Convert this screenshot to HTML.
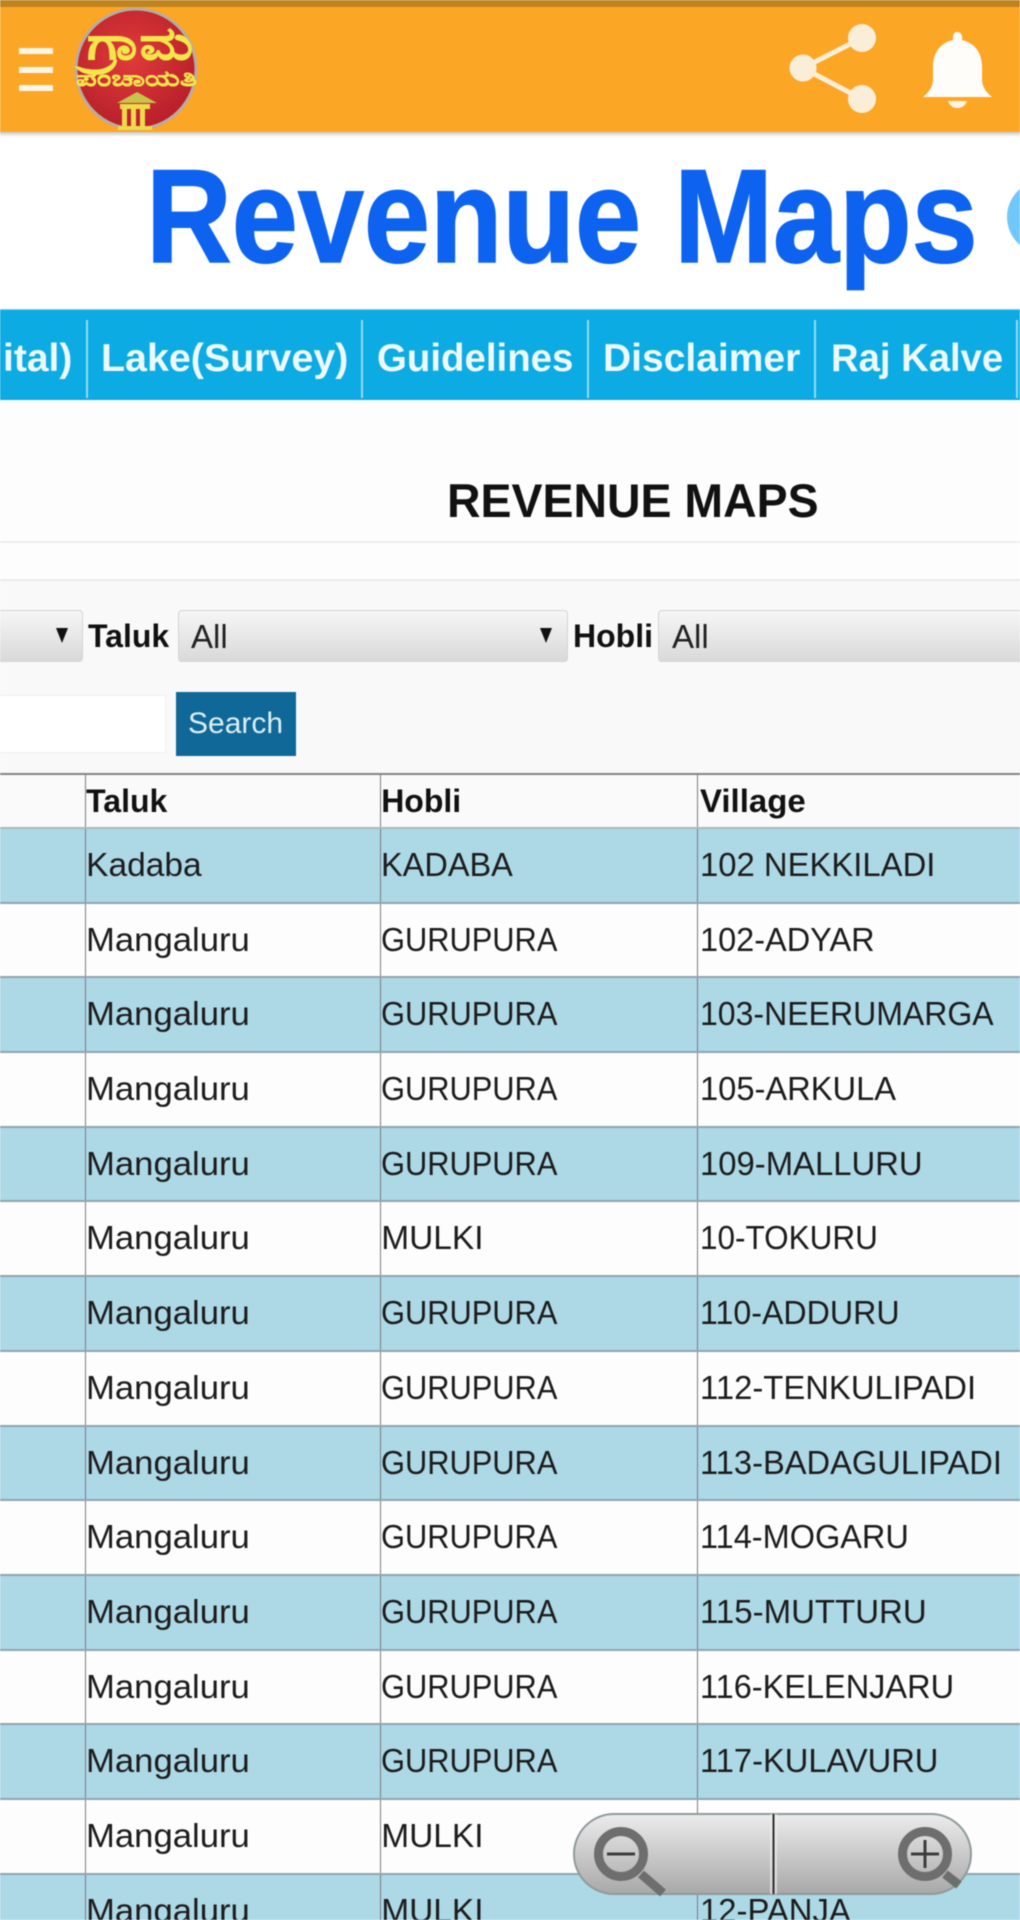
<!DOCTYPE html>
<html lang="en"><head><meta charset="utf-8"><title>Revenue Maps</title>
<style>
html,body{margin:0;padding:0;width:1020px;height:1920px;overflow:hidden;background:#fff}
#p{position:relative;width:1020px;height:1920px;overflow:hidden;background:#fff;font-family:"Liberation Sans",sans-serif;color:#111;filter:blur(.6px)}
.a{position:absolute}
.t{position:absolute;white-space:nowrap;line-height:0;transform-origin:0 50%}
.b{font-weight:bold}
#nav{position:absolute;left:0;top:309px;width:1020px;height:91px;background:#0cabe3;border-top:1px solid #6fd0ef;box-sizing:border-box}
.sep{position:absolute;top:320px;width:2px;height:78px;background:#8fdcf5}
.sel{position:absolute;top:610px;height:52px;box-sizing:border-box;border:1px solid #d4d4d4;border-radius:4px;background:linear-gradient(#f6f6f6,#d9d9d9)}
.arr{position:absolute;top:628px;width:0;height:0;border-left:6px solid transparent;border-right:6px solid transparent;border-top:15px solid #111}
#tb{position:absolute;left:0;top:773px;width:1020px;border-top:2px solid #848484}
.r{display:grid;grid-template-columns:84.5px 295.7px 316.6px 323.2px;height:74.7px;box-sizing:border-box;border-bottom:2px solid #8fa5af;background:#fdfdfd;font-size:33.5px;line-height:73px;color:#1c1c1c}
.r.o{background:#add8e6}
.r.h{height:54px;background:#fafafa;font-weight:bold;font-size:32px;line-height:53px;color:#111;border-bottom:2px solid #a9b9bf}
.r div{border-left:1.5px solid #7c7c7c;white-space:nowrap;overflow:hidden}
.r div:first-child{border-left:0}
.r div:nth-child(2){padding-left:.6px}
.r div:nth-child(4){padding-left:1.8px}
.r span{display:inline-block;transform-origin:0 50%}
.m{transform:scaleX(1.035)}
.g{transform:scaleX(.92)}
</style></head><body><div id="p">
<!-- app bar -->
<div class="a" style="left:0;top:0;width:1020px;height:7px;background:#c0841f"></div>
<div class="a" style="left:0;top:7px;width:1020px;height:125px;background:#fca626"></div>
<div class="a" style="left:0;top:132px;width:1020px;height:4px;background:linear-gradient(#c9c9c9,#f5f5f5)"></div>
<div class="a" style="left:19px;top:48px;width:34px;height:6px;background:#fdf5e6"></div>
<div class="a" style="left:19px;top:67px;width:34px;height:6px;background:#fdf5e6"></div>
<div class="a" style="left:19px;top:85px;width:34px;height:6px;background:#fdf5e6"></div>
<svg class="a" style="left:70px;top:4px" width="134" height="130" viewBox="70 4 134 130">
<defs><radialGradient id="rg" cx=".45" cy=".4" r=".65"><stop offset="0" stop-color="#e03c3a"/><stop offset="1" stop-color="#b51d2a"/></radialGradient></defs>
<circle cx="136" cy="69" r="60" fill="url(#rg)" stroke="#b8ada0" stroke-width="3"/>
<text x="87" y="59" font-size="46" fill="#f3e64a" stroke="#f3e64a" stroke-width=".6" textLength="106" lengthAdjust="spacingAndGlyphs" font-family="'Liberation Sans',sans-serif" font-weight="bold">ಗ್ರಾಮ</text>
<text x="76" y="86" font-size="22" fill="#f3e64a" stroke="#f3e64a" stroke-width=".3" textLength="121" lengthAdjust="spacingAndGlyphs" font-family="'Liberation Sans',sans-serif" font-weight="bold">ಪಂಚಾಯತಿ</text>
<path d="M117 103L137 92L157 103Z" fill="#c9c34a"/>
<path d="M120 104H150V109H120ZM122 109H127V126H122ZM131 109H136V126H131ZM140 109H145V126H140ZM118 126H152V130H118Z" fill="#f0d94a"/>
</svg>
<svg class="a" style="left:780px;top:15px" width="100" height="105" viewBox="780 15 100 105">
<path d="M862 38L803 68L862 99" fill="none" stroke="#fbeed9" stroke-width="5"/>
<circle cx="862" cy="38" r="14" fill="#fbeed9"/><circle cx="803" cy="68" r="13.5" fill="#fbeed9"/><circle cx="862" cy="99" r="14" fill="#fbeed9"/>
</svg>
<svg class="a" style="left:920px;top:28px" width="76" height="84" viewBox="920 28 76 84">
<path d="M957 32c3 0 5 2 5 5v3c13 3 20 13 20 27v12c0 8 4 13 10 18H923c6-5 10-10 10-18V67c0-14 7-24 20-27v-3c0-3 2-5 4-5z" fill="#fffdf9"/>
<path d="M948 101h19c-2 5-5 7-9.500 7s-7.500-2-9.500-7z" fill="#fdf3e2"/>
</svg>
<!-- title -->
<div class="t b" style="left:146px;top:217px;font-size:133px;color:#0d63f0;-webkit-text-stroke:1.500px #0d63f0;transform:scaleX(.893)">Revenue Maps</div>
<div class="a" style="left:1007px;top:180px;width:74px;height:74px;border-radius:50%;background:#70c8fa"></div>
<!-- nav -->
<div id="nav"></div>
<div id="navx">
<div class="sep" style="left:86px"></div><div class="sep" style="left:361px"></div><div class="sep" style="left:587px"></div><div class="sep" style="left:814px"></div><div class="sep" style="left:1016px"></div>
<div class="t b" style="left:3px;top:358.5px;font-size:39px;color:#eef9fd">ital)</div>
<div class="t b" style="left:101px;top:358.5px;font-size:39px;color:#eef9fd;transform:scaleX(1.01)">Lake(Survey)</div>
<div class="t b" style="left:377px;top:358.5px;font-size:39px;color:#eef9fd;transform:scaleX(.985)">Guidelines</div>
<div class="t b" style="left:603px;top:358.5px;font-size:39px;color:#eef9fd">Disclaimer</div>
<div class="t b" style="left:831px;top:358.5px;font-size:39px;color:#eef9fd;transform:scaleX(.98)">Raj Kalve</div>
</div>
<div class="a" style="left:0;top:400px;width:1020px;height:380px;background:#fdfdfd"></div>
<div class="a" style="left:0;top:579px;width:1020px;height:195px;background:#f9f9f9"></div>
<div class="t b" style="left:447px;top:501px;font-size:47px;color:#111;transform:scaleX(.988)">REVENUE MAPS</div>
<div class="a" style="left:0;top:541px;width:1020px;height:1.500px;background:#eeeeee"></div>
<div class="a" style="left:0;top:579px;width:1020px;height:1.500px;background:#ececec"></div>
<!-- filters -->
<div class="sel" style="left:-10px;width:93px"></div><div class="arr" style="left:56px"></div>
<div class="t b" style="left:88px;top:636px;font-size:32px">Taluk</div>
<div class="sel" style="left:178px;width:390px"></div><div class="arr" style="left:540px"></div>
<div class="t" style="left:191px;top:636.6px;font-size:33px;color:#222">All</div>
<div class="t b" style="left:573px;top:636px;font-size:32px">Hobli</div>
<div class="sel" style="left:658px;width:380px"></div>
<div class="t" style="left:672px;top:636.6px;font-size:33px;color:#222">All</div>
<div class="a" style="left:-5px;top:695px;width:171px;height:58px;background:#fff;border:1px solid #f0f0f0;box-sizing:border-box"></div>
<div class="a" style="left:176px;top:692px;width:120px;height:64px;background:#0f6897"></div>
<div class="t" style="left:188px;top:723.5px;font-size:30px;color:#dcedf5">Search</div>
<!-- table -->
<div id="tb">
<div class="r h"><div></div><div>Taluk</div><div>Hobli</div><div><span style="transform:scaleX(1.03)">Village</span></div></div>
<div class="r o"><div></div><div>Kadaba</div><div><span style="transform:scaleX(.97)">KADABA</span></div><div><span style="transform:scaleX(.98)">102 NEKKILADI</span></div></div>
<div class="r"><div></div><div><span class="m">Mangaluru</span></div><div><span class="g">GURUPURA</span></div><div><span style="transform:scaleX(.97)">102-ADYAR</span></div></div>
<div class="r o"><div></div><div><span class="m">Mangaluru</span></div><div><span class="g">GURUPURA</span></div><div><span style="transform:scaleX(.956)">103-NEERUMARGA</span></div></div>
<div class="r"><div></div><div><span class="m">Mangaluru</span></div><div><span class="g">GURUPURA</span></div><div><span style="transform:scaleX(.975)">105-ARKULA</span></div></div>
<div class="r o"><div></div><div><span class="m">Mangaluru</span></div><div><span class="g">GURUPURA</span></div><div><span style="transform:scaleX(.98)">109-MALLURU</span></div></div>
<div class="r"><div></div><div><span class="m">Mangaluru</span></div><div>MULKI</div><div><span style="transform:scaleX(.94)">10-TOKURU</span></div></div>
<div class="r o"><div></div><div><span class="m">Mangaluru</span></div><div><span class="g">GURUPURA</span></div><div><span style="transform:scaleX(.96)">110-ADDURU</span></div></div>
<div class="r"><div></div><div><span class="m">Mangaluru</span></div><div><span class="g">GURUPURA</span></div><div><span style="transform:scaleX(.98)">112-TENKULIPADI</span></div></div>
<div class="r o"><div></div><div><span class="m">Mangaluru</span></div><div><span class="g">GURUPURA</span></div><div><span style="transform:scaleX(.975)">113-BADAGULIPADI</span></div></div>
<div class="r"><div></div><div><span class="m">Mangaluru</span></div><div><span class="g">GURUPURA</span></div><div><span style="transform:scaleX(.97)">114-MOGARU</span></div></div>
<div class="r o"><div></div><div><span class="m">Mangaluru</span></div><div><span class="g">GURUPURA</span></div><div><span style="transform:scaleX(.985)">115-MUTTURU</span></div></div>
<div class="r"><div></div><div><span class="m">Mangaluru</span></div><div><span class="g">GURUPURA</span></div><div><span style="transform:scaleX(.97)">116-KELENJARU</span></div></div>
<div class="r o"><div></div><div><span class="m">Mangaluru</span></div><div><span class="g">GURUPURA</span></div><div><span style="transform:scaleX(.975)">117-KULAVURU</span></div></div>
<div class="r"><div></div><div><span class="m">Mangaluru</span></div><div>MULKI</div><div></div></div>
<div class="r o"><div></div><div><span class="m">Mangaluru</span></div><div>MULKI</div><div><span style="transform:scaleX(.98)">12-PANJA</span></div></div>
</div>
<!-- zoom control -->
<svg class="a" style="left:570px;top:1810px" width="406" height="88" viewBox="570 1810 406 88">
<defs><linearGradient id="zg" x1="0" y1="0" x2="0" y2="1"><stop offset="0" stop-color="#ececec"/><stop offset="1" stop-color="#a8a8a8"/></linearGradient></defs>
<rect x="574" y="1814" width="397" height="80" rx="40" fill="url(#zg)" stroke="#8f9a9c" stroke-width="2"/>
<rect x="770" y="1814" width="7" height="80" fill="#f0f0f0" opacity=".6"/>
<rect x="772.500" y="1814" width="2" height="80" fill="#2e2e2e"/>
<g fill="none" stroke="#6e6e6e">
<circle cx="621" cy="1854" r="22.500" stroke-width="9"/><path d="M641 1874L663 1893" stroke-width="9"/>
<circle cx="925" cy="1854" r="22.500" stroke-width="9"/><path d="M945 1874L959 1885" stroke-width="9"/>
</g>
<path d="M607 1854H635M911 1854H939M925 1840V1868" stroke="#3c3c3c" stroke-width="3" fill="none"/>
</svg>
</div></body></html>
